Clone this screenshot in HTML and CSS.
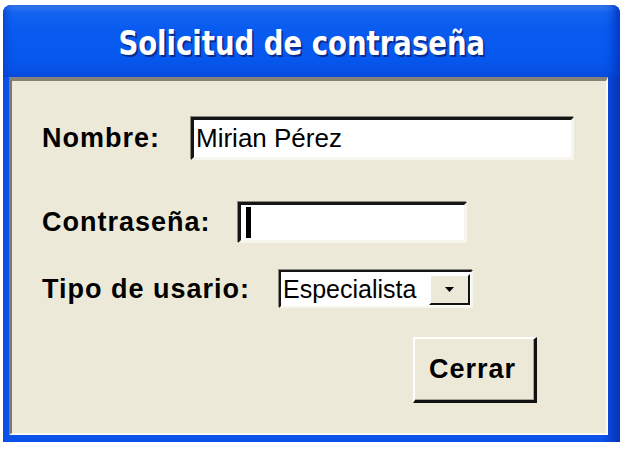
FILE: index.html
```html
<!DOCTYPE html>
<html lang="es">
<head>
  <meta charset="UTF-8">
  <title>Solicitud de contraseña</title>
  <link rel="stylesheet" href="styles.css">
</head>
<body>

<div class="window">
  <div class="titlebar">
    <span class="title">Solicitud de contraseña</span>
  </div>

  <div class="frame">
    <div class="client">

      <div class="row row-name">
        <span class="label">Nombre:</span>
        <div class="textbox textbox-name">Mirian Pérez</div>
      </div>

      <div class="row row-pass">
        <span class="label">Contraseña:</span>
        <div class="textbox textbox-pass"><span class="caret"></span></div>
      </div>

      <div class="row row-type">
        <span class="label">Tipo de usario:</span>
        <div class="combo">
          <span class="combo-value">Especialista</span>
          <span class="combo-btn">
            <svg width="9" height="5" viewBox="0 0 9 5"><path d="M0 0h9L4.5 5z" fill="#000"/></svg>
          </span>
        </div>
      </div>

      <div class="actions">
        <button class="btn">Cerrar</button>
      </div>

    </div>
  </div>
</div>

</body>
</html>
```

FILE: styles.css
```css
body {
  margin: 0;
  background: #ffffff;
  font-family: "Liberation Sans", Arial, sans-serif;
}

/* Window chrome */
.window {
  width: 617px;
  margin: 5px 0 0 3px;
  border-radius: 8px 8px 0 0;
  overflow: hidden;
  background: #0a48dc;
}

.titlebar {
  height: 72px;
  box-sizing: border-box;
  display: flex;
  align-items: center;
  justify-content: center;
  padding: 4px 20px 0 0;
  background: linear-gradient(to bottom, #3f84f4 0, #1464f0 10%, #0a5cf0 30%, #0557ee 75%, #0a4fe2 100%);
  box-shadow: inset 6px 0 8px -4px #0640c8, inset -10px 0 10px -4px #0438c0;
}

.title {
  display: inline-block;
  color: #ffffff;
  font-family: "DejaVu Sans Condensed", "DejaVu Sans", sans-serif;
  font-stretch: condensed;
  font-weight: bold;
  font-size: 34px;
  transform: scaleX(0.9);
  text-shadow: 2px 2px 0 #0c2a8a;
}

.frame {
  padding: 0 12px 7px 6px;
  background: linear-gradient(to right, #0b4be0 0, #0a52ea 4px, #0a52ea 97%, #0634b4 100%);
}

/* Dialog body */
.client {
  height: 358px;
  box-sizing: border-box;
  padding: 36px 0 0 30px;
  background: #ece9d8;
  border-top: 4px solid #868275;
  border-left: 3px solid #7c7b73;
  border-right: 2px solid #fbfaf4;
  border-bottom: 2px solid #fbfaf4;
}

.row {
  display: flex;
  align-items: center;
  gap: 31px;
}

.row-pass {
  margin-top: 42px;
  gap: 27px;
}

.row-type {
  margin-top: 27px;
  gap: 29px;
}

.label {
  font-weight: bold;
  font-size: 27px;
  letter-spacing: 1px;
  color: #000;
}

/* Sunken text boxes */
.textbox {
  box-sizing: border-box;
  display: flex;
  align-items: center;
  padding-left: 2px;
  background: #ffffff;
  border-top: 3px solid #151515;
  border-left: 3px solid #151515;
  border-right: 3px solid #f6f5ee;
  border-bottom: 3px solid #f6f5ee;
  box-shadow: -1px -1px 0 #8c8a80;
  font-size: 26px;
  color: #000;
}

.textbox-name {
  width: 383px;
  height: 43px;
}

.textbox-pass {
  width: 229px;
  height: 41px;
}

.caret {
  width: 5px;
  height: 31px;
  margin-left: 3px;
  background: #000;
}

/* Drop-down list */
.combo {
  box-sizing: border-box;
  width: 194px;
  height: 38px;
  display: flex;
  align-items: center;
  justify-content: space-between;
  padding: 1px 1px 1px 2px;
  background: #ffffff;
  border-top: 2px solid #151515;
  border-left: 2px solid #151515;
  border-right: 2px solid #f6f5ee;
  border-bottom: 2px solid #f6f5ee;
  box-shadow: -1px -1px 0 #8c8a80;
  font-size: 25px;
}

.combo-btn {
  box-sizing: border-box;
  width: 41px;
  height: 31px;
  display: flex;
  align-items: center;
  justify-content: center;
  background: #ece9d8;
  border-top: 2px solid #ffffff;
  border-left: 2px solid #ffffff;
  border-right: 2px solid #111;
  border-bottom: 2px solid #111;
}

/* Raised push button */
.actions {
  display: flex;
  justify-content: flex-end;
  margin-top: 29px;
  padding-right: 69px;
}

.btn {
  width: 124px;
  height: 66px;
  box-sizing: border-box;
  padding: 0 4px 0 0;
  background: #ece9d8;
  border-top: 2px solid #ffffff;
  border-left: 2px solid #ffffff;
  border-right: 3px solid #111;
  border-bottom: 3px solid #111;
  box-shadow: inset -1px -1px 0 #a8a596;
  font-family: "Liberation Sans", Arial, sans-serif;
  font-weight: bold;
  font-size: 27px;
  letter-spacing: 1px;
  color: #000;
}
```
